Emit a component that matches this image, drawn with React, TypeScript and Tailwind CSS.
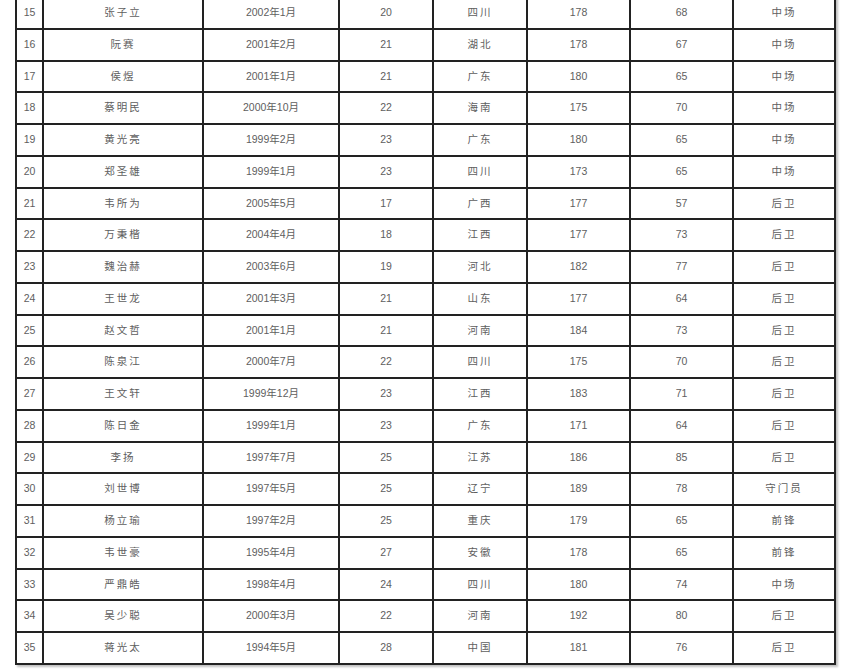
const rows: [string, string, string, string, string, string, string, string][] = [
  ['15', '张子立', '2002年1月', '20', '四川', '178', '68', '中场'],
  ['16', '阮赛', '2001年2月', '21', '湖北', '178', '67', '中场'],
  ['17', '侯煜', '2001年1月', '21', '广东', '180', '65', '中场'],
  ['18', '蔡明民', '2000年10月', '22', '海南', '175', '70', '中场'],
  ['19', '黄光亮', '1999年2月', '23', '广东', '180', '65', '中场'],
  ['20', '郑圣雄', '1999年1月', '23', '四川', '173', '65', '中场'],
  ['21', '韦所为', '2005年5月', '17', '广西', '177', '57', '后卫'],
  ['22', '万秉楷', '2004年4月', '18', '江西', '177', '73', '后卫'],
  ['23', '魏治赫', '2003年6月', '19', '河北', '182', '77', '后卫'],
  ['24', '王世龙', '2001年3月', '21', '山东', '177', '64', '后卫'],
  ['25', '赵文哲', '2001年1月', '21', '河南', '184', '73', '后卫'],
  ['26', '陈泉江', '2000年7月', '22', '四川', '175', '70', '后卫'],
  ['27', '王文轩', '1999年12月', '23', '江西', '183', '71', '后卫'],
  ['28', '陈日金', '1999年1月', '23', '广东', '171', '64', '后卫'],
  ['29', '李扬', '1997年7月', '25', '江苏', '186', '85', '后卫'],
  ['30', '刘世博', '1997年5月', '25', '辽宁', '189', '78', '守门员'],
  ['31', '杨立瑜', '1997年2月', '25', '重庆', '179', '65', '前锋'],
  ['32', '韦世豪', '1995年4月', '27', '安徽', '178', '65', '前锋'],
  ['33', '严鼎皓', '1998年4月', '24', '四川', '180', '74', '中场'],
  ['34', '吴少聪', '2000年3月', '22', '河南', '192', '80', '后卫'],
  ['35', '蒋光太', '1994年5月', '28', '中国', '181', '76', '后卫'],
];

const cell = 'flex items-center justify-center border-r-2 border-[#222]';

export default function App() {
  return (
    <div className="w-[857px] h-[671px] overflow-hidden bg-white font-['Liberation_Sans','Noto_Sans_CJK_SC',sans-serif] text-[10.5px] text-[#5e5e5e]">
      <div className="ml-[15px] -mt-[4px] w-[821px] border-2 border-b-0 border-[#222] shadow-[2px_2px_2px_rgba(0,0,0,0.25)]">
        {rows.map((r) => (
          <div
            key={r[0]}
            className="grid grid-cols-[27px_160px_136px_94px_94px_103px_103px_100px] h-[31.75px] border-b-2 border-[#222]"
          >
            <div className={cell}>{r[0]}</div>
            <div className={`${cell} tracking-[2px]`}>{r[1]}</div>
            <div className={cell}>{r[2]}</div>
            <div className={cell}>{r[3]}</div>
            <div className={`${cell} tracking-[2px]`}>{r[4]}</div>
            <div className={cell}>{r[5]}</div>
            <div className={cell}>{r[6]}</div>
            <div className="flex items-center justify-center tracking-[2px]">{r[7]}</div>
          </div>
        ))}
      </div>
    </div>
  );
}
